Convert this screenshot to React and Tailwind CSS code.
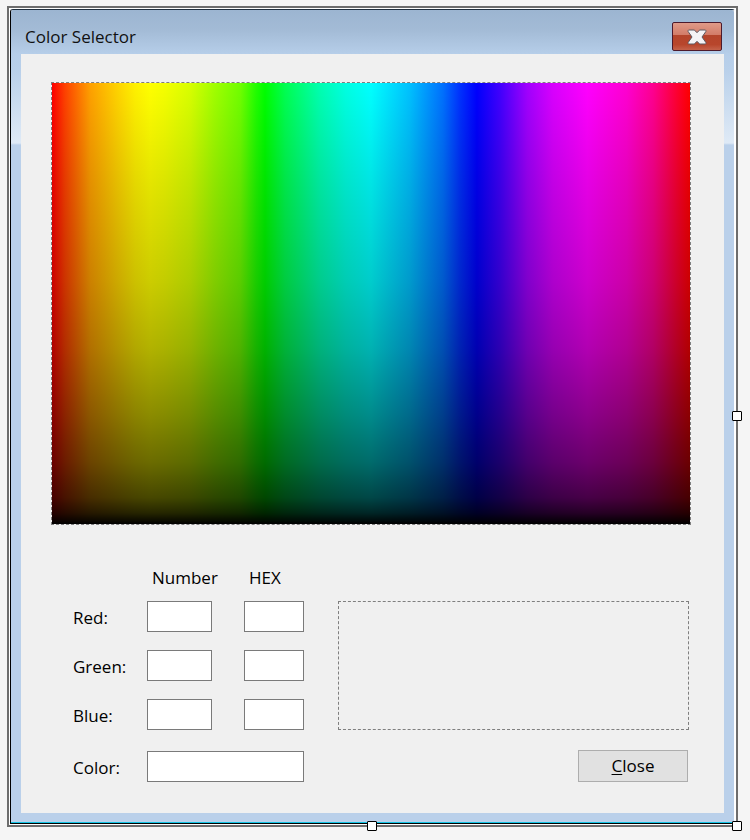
const font = "font-['Open_Sans','Noto_Sans',sans-serif]";

function Handle({ className }) {
  return <div className={`absolute w-[10px] h-[10px] bg-white border border-black rounded-[1px] ${className}`} />;
}

function Field({ className = "w-[65px]" }) {
  return <input readOnly className={`${className} block h-[31px] bg-white border border-[#7a7a7a] outline-none`} />;
}

function Label({ children, className = "" }) {
  return <span className={`text-[17px] leading-[22px] text-black self-center whitespace-nowrap ${className}`}>{children}</span>;
}

export default function App() {
  return (
    <div className={`w-[750px] h-[840px] bg-[#f5f5f5] pt-[6px] pl-[7px] ${font}`}>
      <div className="relative w-[731px] h-[821px] border-2 border-[#6d6d6d]">
        <div className="h-full border border-white">
          <div className="h-full border border-l-black border-r-white border-b-black border-t-[#20303f] rounded-t-[3px]">
            <div className="h-full px-[10px] border-b border-b-[#13c4e4] rounded-t-[2px] bg-[linear-gradient(180deg,#9cb5d1_0px,#a3bbd6_20px,#b6cee9_44px,#b9d0ea_60px,#dfeaf6_133px,#bad0ea_135px)]">
              <div className="h-[44px] flex items-start justify-between">
                <span className="text-[17px] leading-[22px] pl-[4px] pt-[16px] text-[#111]">Color Selector</span>
                <button className="w-[50px] h-[29px] mt-[12px] mr-[2px] rounded-[2px] border border-[#4c1a2c] flex items-center justify-center bg-[linear-gradient(180deg,#e09a88_0%,#d27c68_44%,#b4452b_46%,#b8462c_80%,#c4634b_100%)]">
                  <svg width="20" height="16" viewBox="0 0 20 16">
                    <path d="M2 1h5.200L10 3.600 12.800 1H18a1 1 0 0 1 .800 1.600L15 8l3.800 5.400a1 1 0 0 1-.800 1.600h-5.200L10 12.400 7.200 15H2a1 1 0 0 1-.800-1.600L5 8 1.200 2.600A1 1 0 0 1 2 1z" fill="#f4f4f6" stroke="#5d5a62" strokeWidth="1" strokeLinejoin="round" />
                  </svg>
                </button>
              </div>
              <div className="h-[759px] w-[703px] bg-[#f0f0f0] pt-[28px] pl-[30px]">
                <div className="w-[640px] h-[443px] border border-dashed border-[#7f7f7f]">
                  <div className="w-full h-full bg-[linear-gradient(180deg,rgba(0,0,0,0)_0%,rgba(0,0,0,0.1)_22%,rgba(0,0,0,0.2)_45%,rgba(0,0,0,0.3)_60%,rgba(0,0,0,0.45)_75%,rgba(0,0,0,0.58)_86%,rgba(0,0,0,0.72)_94%,rgba(0,0,0,0.85)_97.500%,rgba(0,0,0,1)_100%),linear-gradient(90deg,#ff0000_0%,#ff4000_2%,#ffa000_6%,#ffd000_10%,#fff000_13%,#ffff00_15.400%,#f4ff00_17.700%,#d8ff00_21.600%,#a0ff00_25.500%,#70ff00_29.500%,#20ff00_32%,#00ff00_33.400%,#00ff50_36.500%,#00ffb0_42%,#00ffe0_46%,#00ffff_50%,#00c0ff_56.100%,#0070ff_61.300%,#0030ff_64%,#0000ff_66.600%,#4000ff_70.200%,#a000ff_74.500%,#d800ff_78.500%,#ff00ff_83.900%,#ff00d0_90.100%,#ff0090_94.200%,#ff0030_98%,#ff0000_100%)]" />
                </div>
                <div className="flex mt-[44px] text-black">
                  <div className="w-[287px] pl-[22px] grid grid-cols-[74px_65px_60px] content-start -mt-[3px]">
                    <span />
                    <Label className="pl-[5px] h-[22px] mb-[13px] w-[80px] pt-[1px]">Number</Label>
                    <Label className="pl-[37px] h-[22px] mb-[13px] pt-[1px]">HEX</Label>

                    <Label className="pt-[3px]">Red:</Label>
                    <Field />
                    <Field className="w-[60px] ml-[32px]" />

                    <Label className="mt-[18px] pt-[3px]">Green:</Label>
                    <div className="mt-[18px]"><Field /></div>
                    <div className="mt-[18px]"><Field className="w-[60px] ml-[32px]" /></div>

                    <Label className="mt-[18px] pt-[3px]">Blue:</Label>
                    <div className="mt-[18px]"><Field /></div>
                    <div className="mt-[18px]"><Field className="w-[60px] ml-[32px]" /></div>

                    <Label className="mt-[21px] pt-[3px]">Color:</Label>
                    <div className="mt-[21px] col-span-2"><Field className="w-[157px]" /></div>
                  </div>
                  <div className="pt-[32px] w-[351px] flex flex-col items-end">
                    <div className="w-[351px] h-[129px] border border-dashed border-[#7f7f7f]" />
                    <button className="mt-[20px] mr-[1px] w-[110px] h-[32px] bg-[#e1e1e1] border border-[#adadad] text-[17px] leading-[22px] text-black">
                      <span className="underline underline-offset-2">C</span>lose
                    </button>
                  </div>
                </div>
              </div>
            </div>
          </div>
        </div>
        <Handle className="left-[723px] top-[403px]" />
        <Handle className="left-[358px] top-[813px]" />
        <Handle className="left-[723px] top-[813px]" />
      </div>
    </div>
  );
}
